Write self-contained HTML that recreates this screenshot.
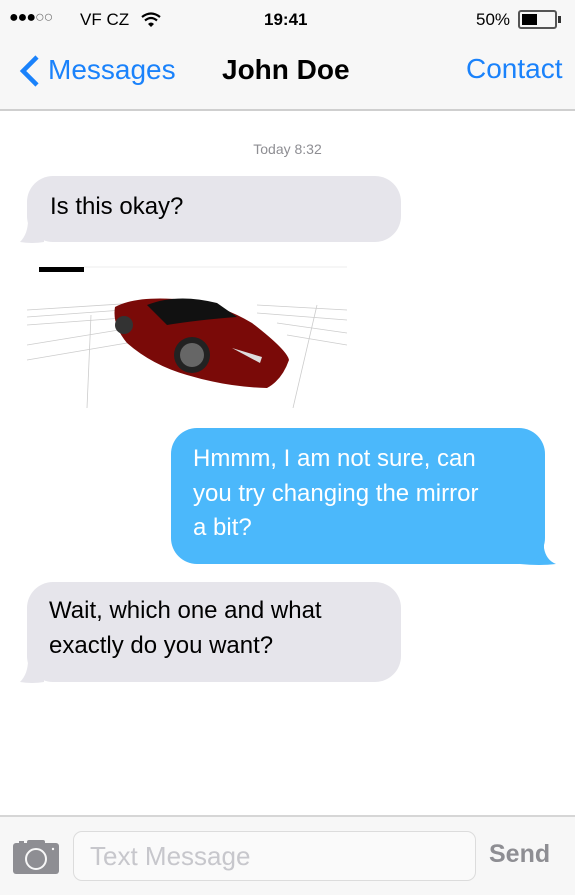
<!DOCTYPE html>
<html><head><meta charset="utf-8"><style>
*{margin:0;padding:0;box-sizing:border-box}
body{width:575px;height:895px;position:relative;background:#fff;font-family:"Liberation Sans",Arial,Helvetica,sans-serif;overflow:hidden}
.abs{position:absolute}
.bubble{position:absolute;border-radius:26px;font-size:24px;line-height:34.5px;white-space:nowrap;font-family:"Liberation Sans",Arial,sans-serif}
.gray{background:#e6e5eb;color:#000}
.blue{background:#4bb8fb;color:#fff}
</style></head><body>
<div class="abs" style="left:0;top:0;width:575px;height:111px;background:#f7f7f7;border-bottom:2px solid #cfcfcf"></div>
<div class="abs" style="left:9px;top:9px;font-size:16px;color:#000;letter-spacing:-1px">●●●<span style="color:#777">○○</span></div>
<div class="abs" style="left:80px;top:10px;font-size:17px">VF CZ</div>
<svg class="abs" style="left:141px;top:12px" width="20" height="16" viewBox="0 0 20 16"><path d="M1 5 Q10 -2 19 5" stroke="#000" stroke-width="2.2" fill="none"/><path d="M4 8.5 Q10 3.5 16 8.5" stroke="#000" stroke-width="2.2" fill="none"/><path d="M7 12 Q10 9 13 12 L10 15Z" fill="#000"/></svg>
<div class="abs" style="left:264px;top:10px;font-size:17px;font-weight:bold">19:41</div>
<div class="abs" style="left:476px;top:10px;font-size:17px">50%</div>
<div class="abs" style="left:518px;top:10px;width:39px;height:19px;border:2px solid #555;border-radius:3px;padding:2px"><div style="width:15px;height:11px;background:#000"></div></div>
<div class="abs" style="left:558px;top:16px;width:3px;height:7px;background:#333"></div>
<svg class="abs" style="left:18px;top:54px" width="24" height="34" viewBox="0 0 24 34"><path d="M19 3 L5 17 L19 31" stroke="#1a82fb" stroke-width="4.5" fill="none"/></svg>
<div class="abs" style="left:48px;top:54px;font-size:28px;color:#1a82fb">Messages</div>
<div class="abs" style="left:222px;top:54px;font-size:28px;font-weight:bold">John Doe</div>
<div class="abs" style="left:466px;top:53px;font-size:28px;color:#1a82fb">Contact</div>
<div class="abs" style="left:0;width:575px;top:141px;text-align:center;font-size:14px;color:#8e8e93">Today 8:32</div>
<svg class="abs" style="left:14px;top:200px" width="30" height="44"><path d="M14 0 L30 0 L30 42 Q18 44 6 42 Q14 34 14 20Z" fill="#e6e5eb"/></svg>
<div class="bubble gray" style="left:27px;top:176px;width:374px;height:66px;padding:14px 23px">Is this okay?</div>
<svg class="abs" style="left:27px;top:265px" width="320" height="143" viewBox="0 0 320 143">
<rect x="12" y="2" width="45" height="5" fill="#000"/>
<line x1="57" y1="2" x2="320" y2="2" stroke="#eee"/>
<g stroke="#ccc" stroke-width="0.8" fill="none">
<path d="M0 45 L110 38 M0 52 L110 44 M0 60 L110 52 M0 80 L110 62 M0 95 L100 78"/>
<path d="M230 40 L320 45 M230 48 L320 55 M250 58 L320 68 M260 70 L320 80"/>
<path d="M64 50 L60 143 M290 40 L266 143"/>
</g>
<path d="M88 42 Q110 30 160 35 Q195 40 225 58 Q260 85 262 95 Q255 115 240 123 Q200 122 160 110 Q125 100 100 78 Q85 60 88 42Z" fill="#7a0a08"/>
<path d="M120 40 Q150 28 190 38 L210 52 Q170 55 140 60Z" fill="#111"/>
<circle cx="165" cy="90" r="18" fill="#222"/><circle cx="165" cy="90" r="12" fill="#666"/>
<circle cx="97" cy="60" r="9" fill="#333"/>
<path d="M205 83 L235 92 L233 98Z" fill="#ddd"/>
</svg>
<svg class="abs" style="left:520px;top:520px" width="40" height="46"><path d="M0 0 L24 0 L24 28 Q26 40 36 44 Q20 46 0 44Z" fill="#4bb8fb"/></svg>
<div class="bubble blue" style="left:171px;top:428px;width:374px;height:136px;padding:14px 22px;font-weight:normal">Hmmm, I am not sure, can<br>you try changing the mirror<br>a bit?</div>
<svg class="abs" style="left:14px;top:640px" width="30" height="44"><path d="M14 0 L30 0 L30 42 Q18 44 6 42 Q14 34 14 20Z" fill="#e6e5eb"/></svg>
<div class="bubble gray" style="left:27px;top:582px;width:374px;height:100px;padding:12px 22px">Wait, which one and what<br>exactly do you want?</div>
<div class="abs" style="left:0;top:815px;width:575px;height:80px;background:#f7f7f7;border-top:2px solid #d6d6d6"></div>
<svg class="abs" style="left:13px;top:840px" width="46" height="34" viewBox="0 0 46 34"><rect x="0" y="3" width="46" height="31" rx="3" fill="#8e8e93"/><rect x="14" y="0" width="18" height="6" rx="2" fill="#8e8e93"/><rect x="6" y="1" width="5" height="3" fill="#8e8e93"/><circle cx="23" cy="19" r="10" fill="none" stroke="#f7f7f7" stroke-width="2"/><circle cx="40" cy="9" r="1.2" fill="#f7f7f7"/></svg>
<div class="abs" style="left:73px;top:831px;width:403px;height:50px;border:1.5px solid #dcdcdc;border-radius:9px;background:#fafafa"></div>
<div class="abs" style="left:90px;top:841px;font-size:26px;color:#c7c7cc">Text Message</div>
<div class="abs" style="left:489px;top:840px;font-size:25px;font-weight:bold;color:#8e8e93">Send</div>
</body></html>
